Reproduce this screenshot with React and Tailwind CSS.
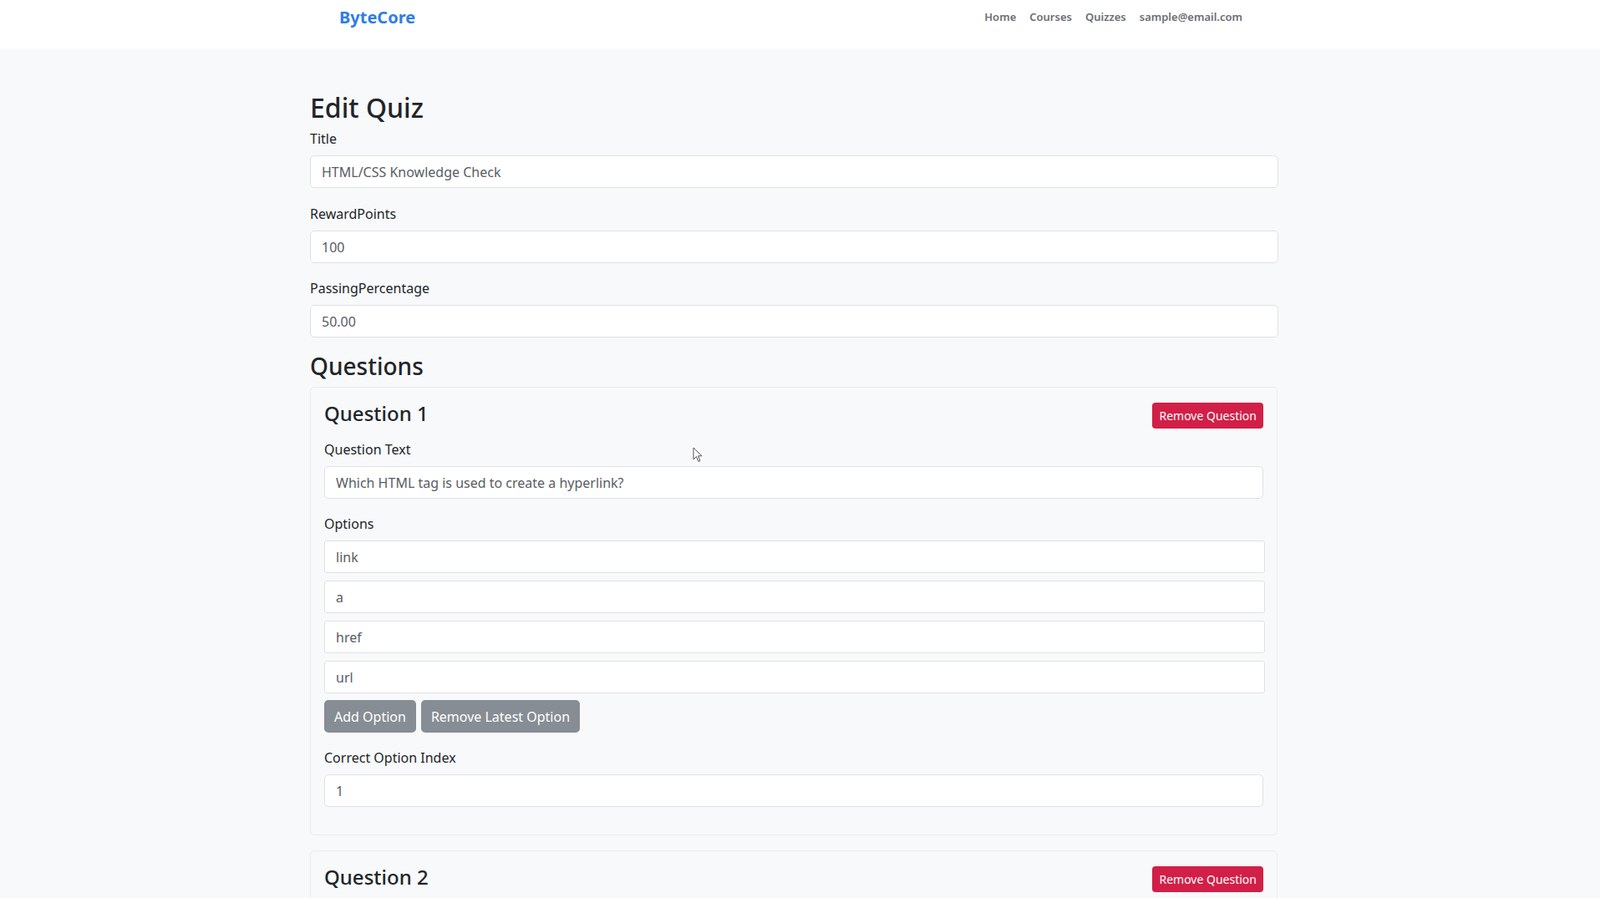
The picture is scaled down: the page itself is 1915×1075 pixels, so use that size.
import React from 'react';

const font = { fontFamily: '"Segoe UI", "Noto Sans", sans-serif' };

function Field({ label, value, className = '' }) {
  return (
    <div className={className}>
      <label className="block h-6 leading-6 text-base text-[#212529]">{label}</label>
      <input
        defaultValue={value}
        className="mt-2 block w-full h-[39px] px-[13px] bg-white border border-[#dee2e6] rounded-[5px] text-base text-[#585d63] outline-none"
      />
    </div>
  );
}

function QuestionCard({ n, text, options, correct }) {
  return (
    <div className="border border-[#eaecef] rounded-[5px] bg-[#f8f9fa] px-4 pt-4 pb-4">
      <div className="flex items-center justify-between h-[35px]">
        <h4 className="pb-[6px] text-2xl font-medium text-[#212529] leading-[29px]">Question {n}</h4>
        <button className="h-[31px] px-2 rounded-[4px] bg-[#d21f47] text-white text-sm">
          Remove Question
        </button>
      </div>
      {text !== undefined && (
        <>
          <Field label="Question Text" value={text} className="mt-[11px]" />
          <div className="mt-[18px]">
            <label className="block h-6 leading-6 text-base text-[#212529]">Options</label>
            <div className="mt-[8px] flex flex-col gap-[9px] mr-[-2px]">
              {options.map((o) => (
                <input
                  key={o}
                  defaultValue={o}
                  className="block w-full h-[39px] px-[13px] bg-white border border-[#dee2e6] rounded-[3px] text-base text-[#585d63] outline-none"
                />
              ))}
            </div>
            <div className="mt-[8px] flex gap-[6px]">
              <button className="h-[39px] px-3 rounded-[5px] bg-[#878d94] text-white text-base">Add Option</button>
              <button className="h-[39px] px-3 rounded-[5px] bg-[#878d94] text-white text-base">Remove Latest Option</button>
            </div>
          </div>
          <Field label="Correct Option Index" value={correct} className="mt-[18px] mb-[17px]" />
        </>
      )}
    </div>
  );
}

function Cursor() {
  return (
    <svg
      className="absolute left-[829px] top-[535px] pointer-events-none"
      width="12"
      height="19"
      viewBox="0 0 12 19"
    >
      <path
        d="M1 1 L1 15 L4.5 11.5 L7 17.5 L9 16.6 L6.6 10.8 L11 10.8 Z"
        fill="#fff"
        stroke="#555"
        strokeWidth="1"
        strokeLinejoin="round"
      />
    </svg>
  );
}

export default function App() {
  return (
    <div className="relative min-h-screen bg-[#f8f9fa]" style={font}>
      <nav className="h-[58px] bg-white">
        <div className="ml-[406px] w-[1081px] h-[41px] flex items-center justify-between">
          <a className="text-xl font-bold text-[#2f7de6]">ByteCore</a>
          <div className="flex gap-[16px] text-[13px] font-semibold text-[#6b6e72]">
            <a>Home</a>
            <a>Courses</a>
            <a>Quizzes</a>
            <a>sample@email.com</a>
          </div>
        </div>
      </nav>

      <main className="ml-[371px] w-[1159px] pt-[52px]">
        <h2 className="text-[32px] font-medium leading-[38px] text-[#212529]">Edit Quiz</h2>
        <Field label="Title" value="HTML/CSS Knowledge Check" className="mt-[6px]" />
        <Field label="RewardPoints" value="100" className="mt-[19px]" />
        <Field label="PassingPercentage" value="50.00" className="mt-[18px]" />
        <h3 className="mt-[17px] text-[28px] font-medium leading-[34px] text-[#212529]">Questions</h3>
        <div className="mt-[8px] flex flex-col gap-[18px] mr-[1px]">
          <QuestionCard
            n={1}
            text="Which HTML tag is used to create a hyperlink?"
            options={['link', 'a', 'href', 'url']}
            correct="1"
          />
          <QuestionCard n={2} />
        </div>
      </main>
      <Cursor />
    </div>
  );
}
